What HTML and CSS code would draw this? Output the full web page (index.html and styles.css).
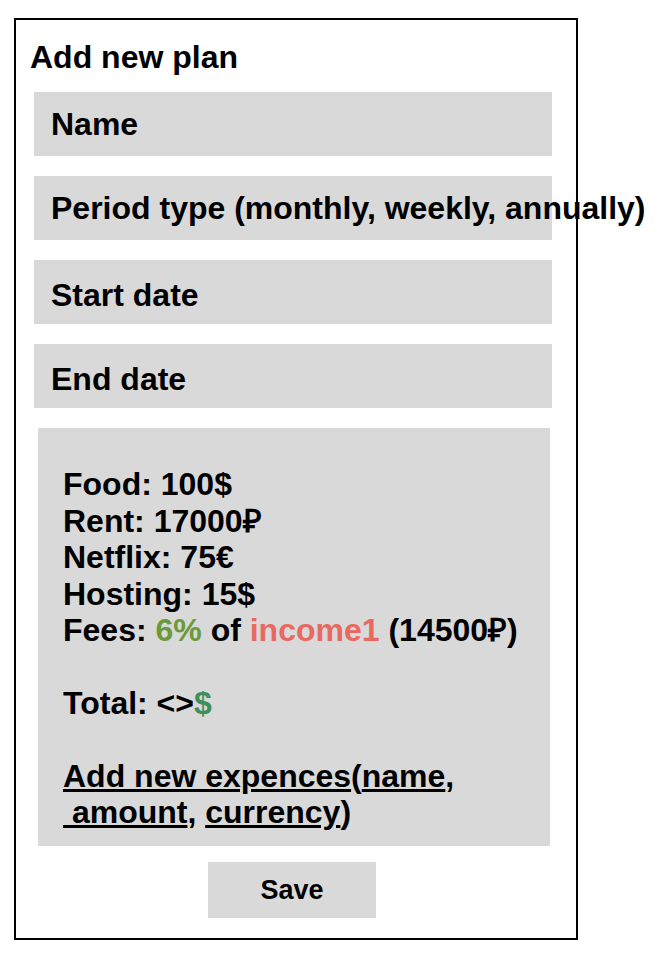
FILE: index.html
```html
<!DOCTYPE html>
<html lang="en">
<head>
    <meta charset="UTF-8">
    <meta name="viewport" content="width=device-width, initial-scale=1.0">
    <title>Add new plan</title>
    <link rel="stylesheet" href="styles.css">
</head>
<body>
    <div class="plan">
        <h1 class="title">Add new plan</h1>
        <div class="field">Name</div>
        <div class="field">Period type (monthly, weekly, annually)</div>
        <div class="field date">Start date</div>
        <div class="field date">End date</div>
        <div class="expenses">
            <br>
            Food: 100$<br>
            Rent: 17000₽<br>
            Netflix: 75€<br>
            Hosting: 15$<br>
            Fees: <span class="green">6%</span> of <span class="red">income1</span> (14500₽)<br>
            <br>
            Total: &lt;&gt;<span class="dollar">$</span><br>
            <br>
            <span class="link">Add new expences</span>(<span class="link">name</span>,<br>
            <span class="link">&nbsp;amount</span>, <span class="link">currency</span>)
        </div>
        <div class="actions">
            <button class="save">Save</button>
        </div>
    </div>
</body>
</html>
```

FILE: styles.css
```css
body {
    margin: 0;
    padding: 18px 0 0 14px;
    font-family: "Liberation Sans", Arial, sans-serif;
    font-weight: bold;
    color: #000;
}
.plan {
    width: 564px;
    height: 922px;
    border: 2px solid #000;
    padding: 0 0 0 14px;
    box-sizing: border-box;
}
.title {
    margin: 0;
    padding-top: 18px;
    height: 72px;
    box-sizing: border-box;
    font-size: 32px;
    line-height: 38px;
}
.field {
    width: 518px;
    background-color: #d9d9d9;
    height: 64px;
    margin: 0 0 20px 4px;
    padding-left: 17px;
    box-sizing: border-box;
    font-size: 32px;
    line-height: 64px;
    white-space: nowrap;
}
/* date fields sit a bit lower in the mockup */
.field.date {
    padding-top: 6px;
    line-height: 58px;
}
.expenses {
    width: 512px;
    background-color: #d9d9d9;
    margin: 0 0 0 8px;
    padding: 2px 0 16px 25px;
    box-sizing: border-box;
    font-size: 32px;
    line-height: 36.4px;
}
.green {
    color: #6a9a3a;
}
.red {
    color: #e8695f;
}
.dollar {
    color: #3f8f5b;
}
.link {
    text-decoration: underline;
}
.actions {
    width: 518px;
    display: flex;
    justify-content: center;
    margin-left: 4px;
    padding: 16px 2px 0 0;
    box-sizing: border-box;
}
.save {
    width: 168px;
    height: 56px;
    background-color: #d9d9d9;
    border: none;
    font-family: "Liberation Sans", Arial, sans-serif;
    font-weight: bold;
    font-size: 27px;
}
```
